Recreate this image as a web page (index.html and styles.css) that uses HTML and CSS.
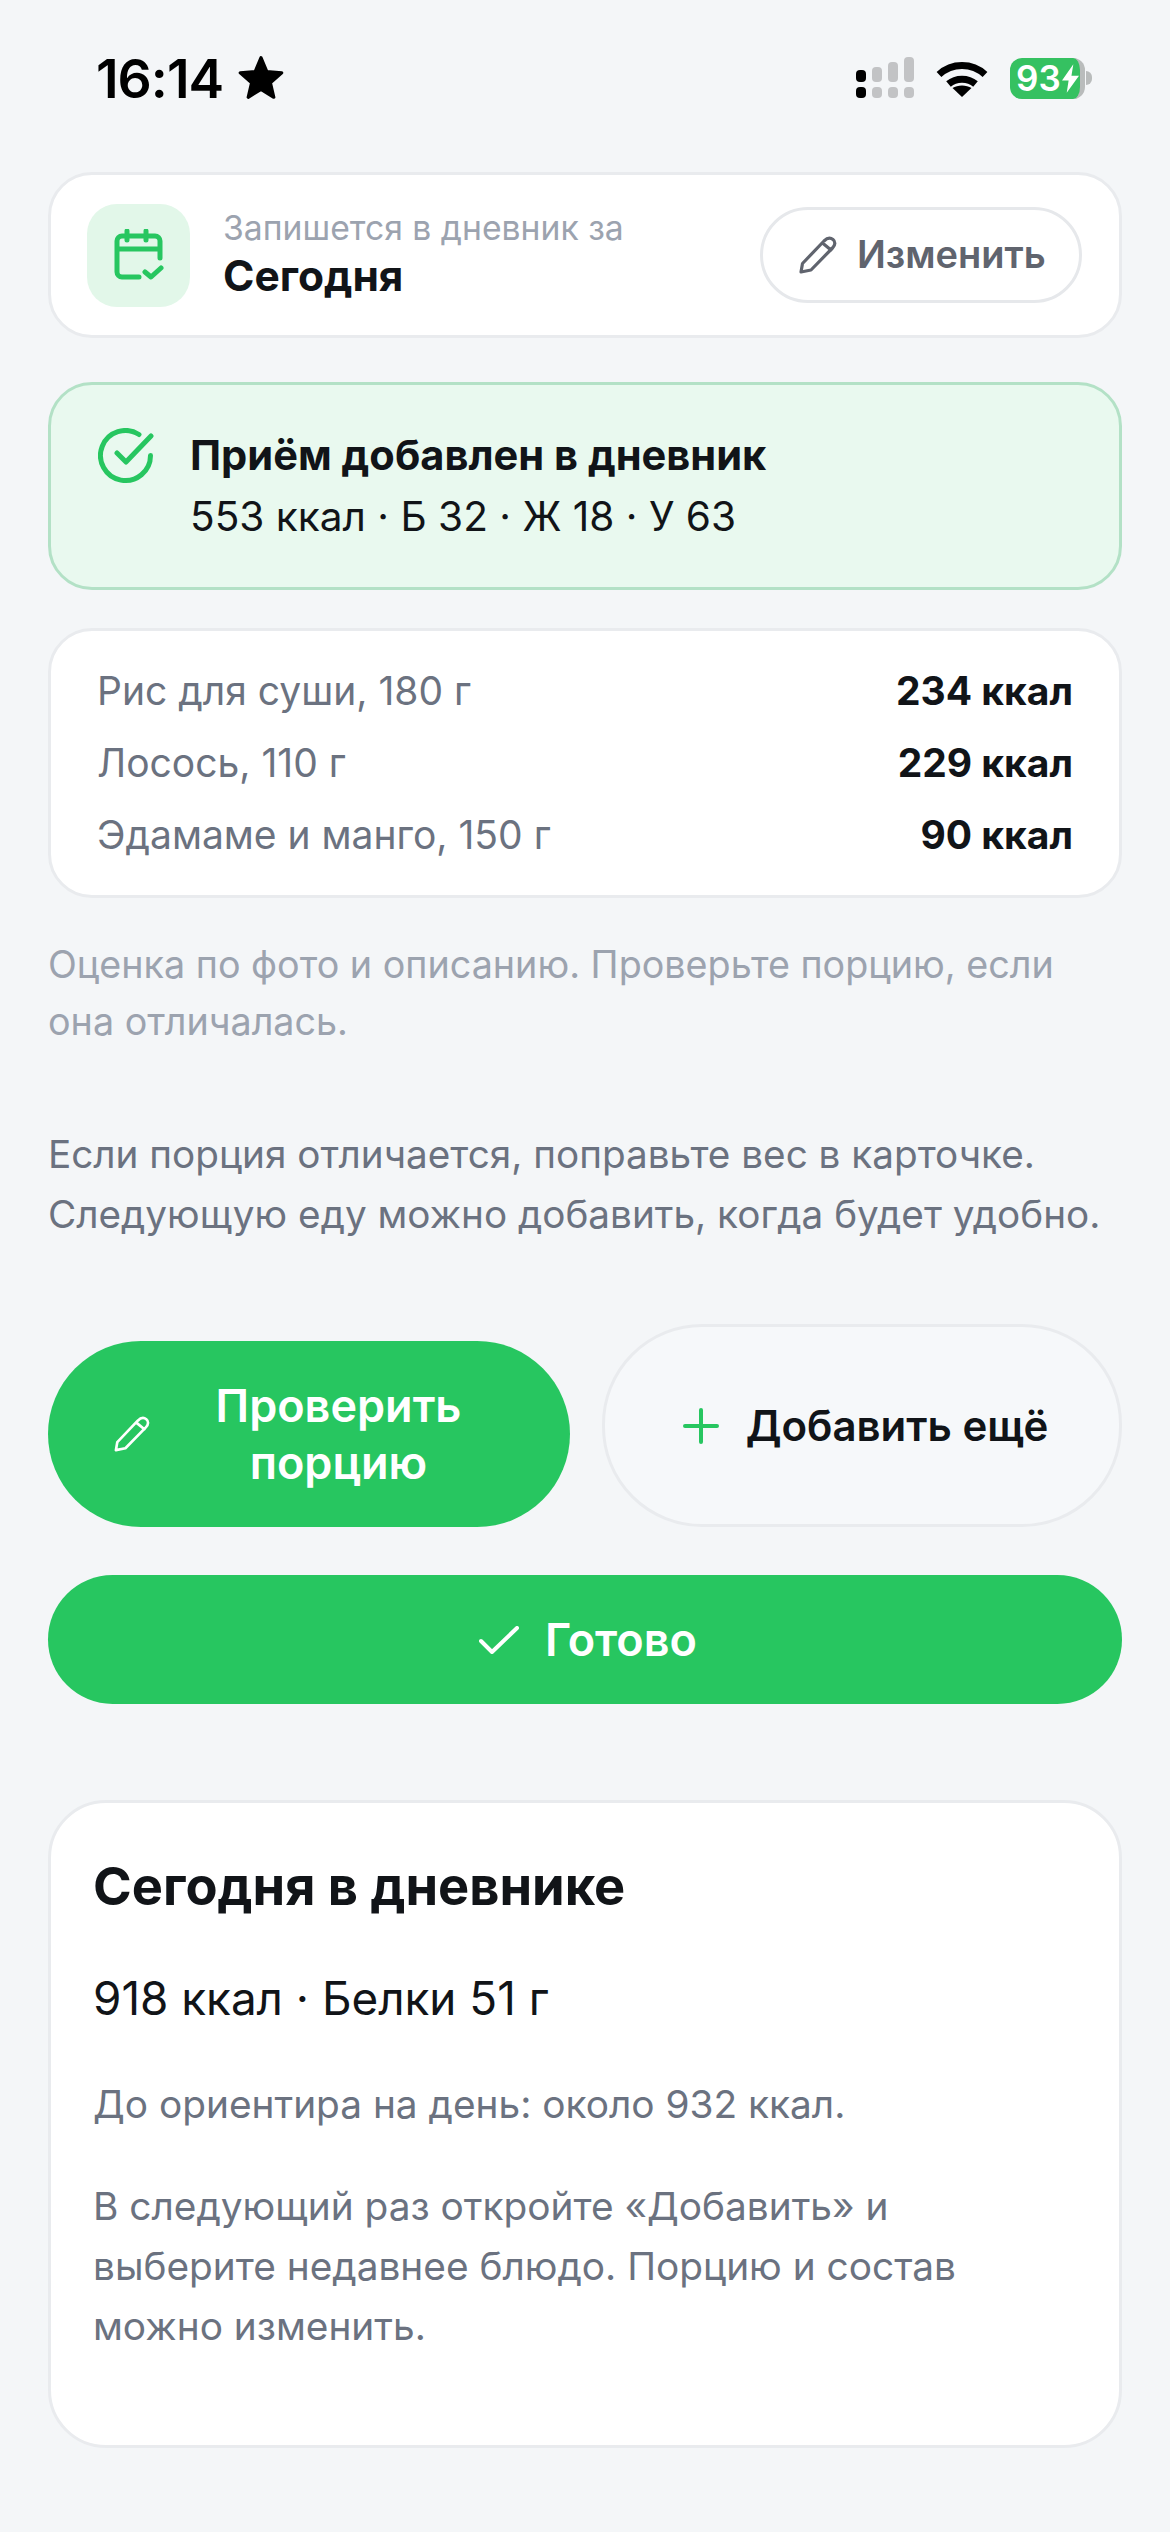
FILE: index.html
```html
<!DOCTYPE html>
<html lang="ru">
<head>
    <meta charset="UTF-8">
    <title>Приём добавлен</title>
    <link rel="stylesheet" href="styles.css">
</head>
<body>

    <div class="status-bar">
        <div class="status-left">
            <span class="time">16:14</span>
            <svg class="star" viewBox="0 0 46 44"><path d="M23 2.500l5.600 13.400 14.300 1.200-10.900 9.400 3.300 14-12.300-7.500-12.300 7.500 3.300-14L3.100 17.100l14.300-1.200z" fill="#000" stroke="#000" stroke-width="3" stroke-linejoin="round"/></svg>
        </div>
        <div class="status-right">
            <svg class="signal" viewBox="0 0 58 42">
                <rect x="0" y="13" width="10" height="12" rx="4" fill="#000"/>
                <rect x="0" y="30" width="10" height="11" rx="4" fill="#000"/>
                <g fill="#c2c3c5">
                    <rect x="16" y="10" width="10" height="15" rx="4"/>
                    <rect x="32" y="5" width="10" height="20" rx="4"/>
                    <rect x="48" y="0" width="10" height="25" rx="4"/>
                    <rect x="16" y="30" width="10" height="11" rx="4"/>
                    <rect x="32" y="30" width="10" height="11" rx="4"/>
                    <rect x="48" y="30" width="10" height="11" rx="4"/>
                </g>
            </svg>
            <svg class="wifi" viewBox="0 0 52 38">
                <path d="M3 15.500C16 3.500 36 3.500 49 15.500M12.500 25C20 18.500 32 18.500 39.500 25" fill="none" stroke="#000" stroke-width="7"/>
                <path d="M26 38l-9.500-9C21.500 25.500 30.500 25.500 35.500 29z" fill="#000"/>
            </svg>
            <div class="battery">
                <div class="battery-body">
                    <span>93</span>
                    <svg class="bolt" viewBox="0 0 18 30"><path d="M12 0L0 17h7l-2 13L18 12h-8z" fill="#fff"/></svg>
                </div>
                <div class="battery-nub"></div>
            </div>
        </div>
    </div>

    <main class="content">
        <section class="card date-card">
            <div class="date-tile">
                <svg class="calendar" viewBox="0 0 50 52" fill="none" stroke="#27c660" stroke-width="5" stroke-linecap="round" stroke-linejoin="round">
                    <path d="M46 29V12a5 5 0 0 0-5-5H8a5 5 0 0 0-5 5v31a5 5 0 0 0 5 5h17M3 20h43M13 2v9M32 2v9"/>
                    <path d="M31 43l6 5 10-9"/>
                </svg>
            </div>
            <div class="date-text">
                <div class="date-label">Запишется в дневник за</div>
                <div class="date-value">Сегодня</div>
            </div>
            <button class="edit-btn">
                <svg class="edit-icon" viewBox="0 0 40 40" fill="none" stroke="#60646e" stroke-width="3.200" stroke-linecap="round" stroke-linejoin="round">
                    <path d="M2 37l1.500-8.500L25 6c3-3 6.500-3.500 9-1.500s2.500 5.500-.5 8.500L12 35zM23.500 8l8.500 7"/>
                </svg>
                Изменить
            </button>
        </section>

        <section class="added">
            <svg class="added-icon" viewBox="0 0 56 56" fill="none" stroke="#27c660" stroke-width="5" stroke-linecap="round" stroke-linejoin="round">
                <path d="M52.500 27.500A25 25 0 1 1 41 6.500"/>
                <path d="M19 25l9 9L53 8"/>
            </svg>
            <div>
                <div class="added-title">Приём добавлен в дневник</div>
                <div class="added-macros">553 ккал · Б 32 · Ж 18 · У 63</div>
            </div>
        </section>

        <section class="card items">
            <div class="item"><span>Рис для суши, 180 г</span><b>234 ккал</b></div>
            <div class="item"><span>Лосось, 110 г</span><b>229 ккал</b></div>
            <div class="item"><span>Эдамаме и манго, 150 г</span><b>90 ккал</b></div>
        </section>

        <p class="hint">Оценка по фото и описанию. Проверьте порцию, если она отличалась.</p>

        <p class="note">Если порция отличается, поправьте вес в карточке. Следующую еду можно добавить, когда будет удобно.</p>

        <div class="actions">
            <button class="btn btn-check">
                <svg class="btn-pencil" viewBox="0 0 40 40" fill="none" stroke="#fff" stroke-width="2.800" stroke-linecap="round" stroke-linejoin="round">
                    <path d="M2 37l1.500-8.500L25 6c3-3 6.500-3.500 9-1.500s2.500 5.500-.5 8.500L12 35zM23.500 8l8.500 7"/>
                </svg>
                <span class="btn-check-text">Проверить порцию</span>
            </button>
            <button class="btn btn-add">
                <svg class="plus" viewBox="0 0 36 36" fill="none" stroke="#27c660" stroke-width="4" stroke-linecap="round"><path d="M18 2v32M2 18h32"/></svg>
                Добавить ещё
            </button>
        </div>

        <button class="btn btn-done">
            <svg class="done-check" viewBox="0 0 40 28" fill="none" stroke="#fff" stroke-width="4" stroke-linecap="round" stroke-linejoin="round"><path d="M2 15l11 11L38 2"/></svg>
            Готово
        </button>

        <section class="card summary">
            <h2>Сегодня в дневнике</h2>
            <div class="summary-main">918 ккал · Белки 51 г</div>
            <p class="summary-left">До ориентира на день: около 932 ккал.</p>
            <p class="summary-next">В следующий раз откройте «Добавить» и выберите недавнее блюдо. Порцию и состав можно изменить.</p>
        </section>
    </main>

</body>
</html>
```

FILE: styles.css
```css
* {
    box-sizing: border-box;
}

body {
    margin: 0;
    height: 2532px;
    overflow: hidden;
    background: #f4f6f8;
    color: #111418;
    font-family: Inter, "Noto Sans", sans-serif;
}

button {
    font-family: inherit;
    border: 0;
    padding: 0;
}

/* status bar */
.status-bar {
    display: flex;
    justify-content: space-between;
    align-items: center;
    height: 156px;
    padding: 0 78px 0 96px;
}

.status-left {
    display: flex;
    align-items: center;
    gap: 14px;
}

.time {
    font-size: 53.500px;
    font-weight: 600;
    color: #000;
    letter-spacing: -1px;
}

.star {
    width: 48px;
    height: 46px;
}

.status-right {
    display: flex;
    align-items: center;
}

.signal {
    width: 58px;
    height: 42px;
}

.wifi {
    width: 52px;
    height: 38px;
    margin-left: 22px;
}

.battery {
    display: flex;
    align-items: center;
    margin-left: 22px;
}

.battery-body {
    display: flex;
    align-items: center;
    gap: 1px;
    width: 75px;
    height: 41px;
    padding-left: 6px;
    border-radius: 12px;
    border-right: 5px solid #b9bcbc;
    background: #35c161;
    color: #fff;
    font-size: 35px;
    font-weight: 600;
}

.bolt {
    width: 17px;
    height: 29px;
}

.battery-nub {
    width: 6px;
    height: 14px;
    margin-left: 1px;
    border-radius: 0 7px 7px 0;
    background: #b9bcbc;
}

/* page */
.content {
    display: flex;
    flex-direction: column;
    padding: 16px 48px 0;
}

.card {
    background: #fff;
    border: 3px solid #e9ebee;
    border-radius: 44px;
}

.date-card {
    display: flex;
    align-items: center;
    height: 166px;
    padding: 0 37px 0 36px;
}

.date-tile {
    display: flex;
    justify-content: center;
    align-items: center;
    width: 103px;
    height: 103px;
    border-radius: 30px;
    background: #e2f7e9;
}

.calendar {
    width: 50px;
    height: 52px;
}

.date-text {
    flex: 1;
    margin-top: -3px;
    margin-left: 33px;
}

.date-label {
    font-size: 33.700px;
    line-height: 44px;
    color: #9ca3af;
}

.date-value {
    font-size: 42.500px;
    line-height: 52px;
    font-weight: 700;
}

.edit-btn {
    display: flex;
    align-items: center;
    gap: 18px;
    width: 322px;
    height: 96px;
    padding: 0 0 3px 36px;
    background: #fff;
    border: 3px solid #e6e8eb;
    border-radius: 48px;
    color: #60646e;
    font-size: 38px;
    font-weight: 600;
}

.edit-icon {
    width: 40px;
    height: 40px;
    margin-top: 3px;
}

.added {
    display: flex;
    gap: 36px;
    height: 208px;
    margin-top: 44px;
    padding: 45px 46px 0;
    background: #e9f9ef;
    border: 3px solid #b3e1c6;
    border-radius: 44px;
}

.added-icon {
    flex: none;
    width: 56px;
    height: 56px;
    margin: -2px 0 0 1px;
}

.added-title {
    font-size: 41.600px;
    line-height: 50px;
    font-weight: 700;
}

.added-macros {
    margin-top: 12px;
    font-size: 40.600px;
    line-height: 50px;
}

.items {
    display: flex;
    flex-direction: column;
    gap: 22px;
    height: 270px;
    margin-top: 38px;
    padding: 35px 46px 0;
}

.item {
    display: flex;
    justify-content: space-between;
    font-size: 39px;
    line-height: 50px;
    color: #6b7280;
}

.item b {
    font-weight: 700;
    color: #111418;
}

.hint {
    margin: 38px 0 0;
    font-size: 37.700px;
    line-height: 57px;
    color: #9ca3af;
}

.note {
    margin: 74px 0 0;
    font-size: 38.700px;
    line-height: 60px;
    color: #6b7280;
}

.actions {
    display: flex;
    align-items: flex-end;
    gap: 32px;
    margin-top: 80px;
}

.btn {
    display: flex;
    justify-content: center;
    align-items: center;
    border-radius: 100px;
    font-weight: 600;
    font-size: 42px;
}

.btn-check {
    gap: 30px;
    width: 522px;
    height: 186px;
    padding: 0 75px 0 66px;
    background: #27c660;
    color: #fff;
    font-size: 45px;
    line-height: 57px;
}

.btn-pencil {
    flex: none;
    width: 38px;
    height: 38px;
}

.btn-check-text {
    flex: 1;
    text-align: center;
}

.btn-add {
    gap: 27px;
    flex: 1;
    height: 203px;
    padding-left: 7px;
    background: #f6f8fa;
    border: 3px solid #e9ebee;
    color: #111418;
}

.plus {
    width: 36px;
    height: 36px;
}

.btn-done {
    gap: 26px;
    width: 100%;
    height: 129px;
    margin-top: 48px;
    padding-left: 6px;
    background: #27c660;
    color: #fff;
    font-size: 45px;
}

.done-check {
    width: 40px;
    height: 28px;
}

.summary {
    height: 648px;
    margin-top: 96px;
    padding: 53px 42px 0;
    border-radius: 58px;
}

.summary h2 {
    margin: 0;
    font-size: 52.400px;
    line-height: 60px;
    font-weight: 700;
}

.summary-main {
    margin-top: 56px;
    font-size: 45.800px;
    line-height: 54px;
}

.summary-left {
    margin: 53px 0 0;
    font-size: 38.800px;
    line-height: 50px;
    color: #6b7280;
}

.summary-next {
    margin: 47px 0 0;
    font-size: 38.800px;
    line-height: 60px;
    color: #6b7280;
}
```
